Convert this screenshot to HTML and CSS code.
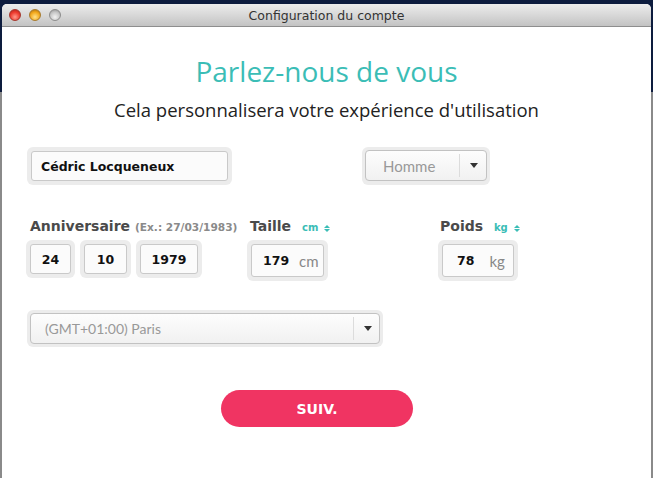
FILE: index.html
```html
<!DOCTYPE html>
<html lang="fr">
<head>
<meta charset="utf-8">
<title>Configuration du compte</title>
<link rel="stylesheet" href="styles.css">
</head>
<body>
<div class="window">
  <div class="titlebar">
    <div class="lights">
      <span class="light red"></span>
      <span class="light yellow"></span>
      <span class="light gray"></span>
    </div>
    <div class="title">Configuration du compte</div>
  </div>
  <div class="content">
    <h1 class="heading">Parlez-nous de vous</h1>
    <p class="sub">Cela personnalisera votre expérience d'utilisation</p>

    <div class="row1">
      <div class="halo name-halo"><div class="input name-input">Cédric Locqueneux</div></div>
      <div class="halo gender-halo">
        <div class="select gender-select">
          <span class="sel-text">Homme</span>
          <span class="sel-div"></span>
          <span class="sel-arrow"></span>
        </div>
      </div>
    </div>

    <div class="row2">
      <div class="group birth">
        <div class="label">Anniversaire <span class="hint">(Ex.: 27/03/1983)</span></div>
        <div class="boxes">
          <div class="halo"><div class="input num w41">24</div></div>
          <div class="halo"><div class="input num w43">10</div></div>
          <div class="halo"><div class="input num w58">1979</div></div>
        </div>
      </div>
      <div class="group taille">
        <div class="label">Taille <span class="unit">cm <span class="updown"><i class="up"></i><i class="down"></i></span></span></div>
        <div class="boxes">
          <div class="halo"><div class="input unit-input w73"><b>179</b><span class="u">cm</span></div></div>
        </div>
      </div>
      <div class="group poids">
        <div class="label">Poids <span class="unit">kg <span class="updown"><i class="up"></i><i class="down"></i></span></span></div>
        <div class="boxes">
          <div class="halo"><div class="input unit-input w72"><b>78</b><span class="u">kg</span></div></div>
        </div>
      </div>
    </div>

    <div class="halo tz-halo">
      <div class="select tz-select">
        <span class="sel-text">(GMT+01:00) Paris</span>
        <span class="sel-div"></span>
        <span class="sel-arrow"></span>
      </div>
    </div>

    <div class="btn-row"><button class="btn">SUIV.</button></div>
  </div>
</div>
</body>
</html>
```

FILE: styles.css
```css
html, body {
  margin: 0;
  padding: 0;
  height: 100%;
}
body {
  background: linear-gradient(to bottom, #0d1c3e 0, #0d1c3e 92px, #8a8a8a 92px, #8a8a8a 100%);
  overflow: hidden;
}
.window {
  margin: 4px 2px 0 2px;
  height: 474px;
  background: #fff;
  border-radius: 5px 5px 0 0;
  overflow: hidden;
  display: flex;
  flex-direction: column;
}
.titlebar {
  height: 23px;
  flex: 0 0 23px;
  background: linear-gradient(to bottom, #ececec 0%, #d8d8d8 50%, #c3c3c3 100%);
  border-bottom: 1px solid #8e8e8e;
  box-sizing: border-box;
  position: relative;
  display: flex;
  align-items: center;
  justify-content: center;
}
.lights {
  position: absolute;
  left: 7px;
  top: 5px;
  display: flex;
  gap: 8px;
}
.light {
  width: 12px;
  height: 12px;
  border-radius: 50%;
  box-sizing: border-box;
}
.red {
  background: radial-gradient(circle at 50% 70%, #ff9a8c 0%, #ee3b2f 55%, #a8221a 100%);
  border: 1px solid #a5342b;
}
.yellow {
  background: radial-gradient(circle at 50% 70%, #ffe28a 0%, #f3a91d 55%, #a5690e 100%);
  border: 1px solid #a87a2a;
}
.gray {
  background: radial-gradient(circle at 50% 70%, #f2f2f2 0%, #c7c7c7 55%, #8e8e8e 100%);
  border: 1px solid #8c8c8c;
}
.title {
  font-family: "DejaVu Sans", sans-serif;
  font-size: 12.5px;
  color: #333;
  padding-top: 1px;
}
.content {
  flex: 1;
  padding: 0 0 0 24px;
}
.heading {
  margin: 27px 0 0 -24px;
  text-align: center;
  font-family: "Open Sans", sans-serif;
  font-weight: 400;
  font-size: 28px;
  line-height: 34px;
  color: #3bbdb6;
}
.sub {
  margin: 11px 0 0 -24px;
  text-align: center;
  font-family: "Open Sans", sans-serif;
  font-size: 18.5px;
  line-height: 22px;
  color: #222;
}
.halo {
  background: #ececec;
  padding: 4px;
  border-radius: 6px;
  display: inline-flex;
}
.input {
  background: #fbfbfb;
  border: 1px solid #c9c9c9;
  border-radius: 3px;
  height: 30px;
  box-sizing: border-box;
  font-family: "DejaVu Sans", sans-serif;
  font-weight: bold;
  font-size: 12.5px;
  color: #111;
  display: flex;
  align-items: center;
}
.row1 {
  margin-top: 26px;
  display: flex;
  align-items: flex-start;
}
.name-halo { margin-left: 1px; }
.name-input {
  width: 197px;
  padding-left: 9px;
}
.gender-halo {
  margin-left: 130px;
  padding: 3px 3px 4px 3px;
}
.select {
  height: 31px;
  box-sizing: border-box;
  border: 1px solid #c2c2c2;
  border-radius: 4px;
  background: linear-gradient(to bottom, #fdfdfd 0%, #f1f1f1 100%);
  display: flex;
  align-items: center;
  font-family: "Lato", sans-serif;
  color: #999;
}
.gender-select {
  width: 122px;
  font-size: 15px;
}
.gender-select .sel-text { margin-left: 17px; width: 76px; }
.sel-div {
  width: 1px;
  height: 23px;
  background: #dcdcdc;
}
.sel-arrow {
  width: 0;
  height: 0;
  border-left: 4px solid transparent;
  border-right: 4px solid transparent;
  border-top: 5px solid #333;
  margin-left: 10px;
}
.row2 {
  margin-top: 32px;
  display: grid;
  grid-template-columns: 221px 191px auto;
  align-items: start;
}
.group { display: flex; flex-direction: column; }
.birth .label { padding-left: 4px; }
.taille .label { padding-left: 3px; }
.poids .label { padding-left: 2px; }
.label {
  font-family: "DejaVu Sans", sans-serif;
  font-weight: bold;
  font-size: 14px;
  color: #4a4a4a;
  height: 18px;
  line-height: 18px;
  white-space: nowrap;
}
.hint {
  font-size: 10.6px;
  color: #8a8a8a;
}
.unit {
  font-size: 10px;
  color: #3bbdb6;
  margin-left: 6px;
  display: inline-flex;
  align-items: center;
  gap: 6px;
}
.updown {
  display: inline-flex;
  flex-direction: column;
  gap: 1px;
}
.updown i {
  display: block;
  width: 0;
  height: 0;
  border-left: 3px solid transparent;
  border-right: 3px solid transparent;
}
.updown .up { border-bottom: 3px solid #3bbdb6; }
.updown .down { border-top: 3px solid #3bbdb6; }
.boxes {
  margin-top: 5px;
  display: flex;
  gap: 5px;
}
.num {
  justify-content: center;
}
.w41 { width: 41px; }
.w43 { width: 43px; }
.w58 { width: 58px; }
.unit-input {
  height: 33px;
  justify-content: flex-start;
}
.w73 { width: 73px; padding-left: 11px; }
.w72 { width: 72px; padding-left: 14px; }
.unit-input .u {
  font-family: "Lato", sans-serif;
  font-weight: normal;
  color: #888;
  font-size: 15px;
  margin-left: 10px;
}
.w72 .u { margin-left: 15px; }
.tz-halo {
  margin-top: 29px;
  margin-left: 1px;
  padding: 3px;
}
.tz-select {
  width: 350px;
  font-size: 14px;
}
.tz-select .sel-text { margin-left: 14px; width: 308px; }
.btn-row {
  margin-top: 43px;
  margin-left: 195px;
}
.btn {
  width: 192px;
  height: 37px;
  border: none;
  border-radius: 19px;
  background: #f03462;
  color: #fff;
  font-family: "DejaVu Sans", sans-serif;
  font-weight: bold;
  font-size: 14px;
  padding: 0;
  display: block;
}
```
